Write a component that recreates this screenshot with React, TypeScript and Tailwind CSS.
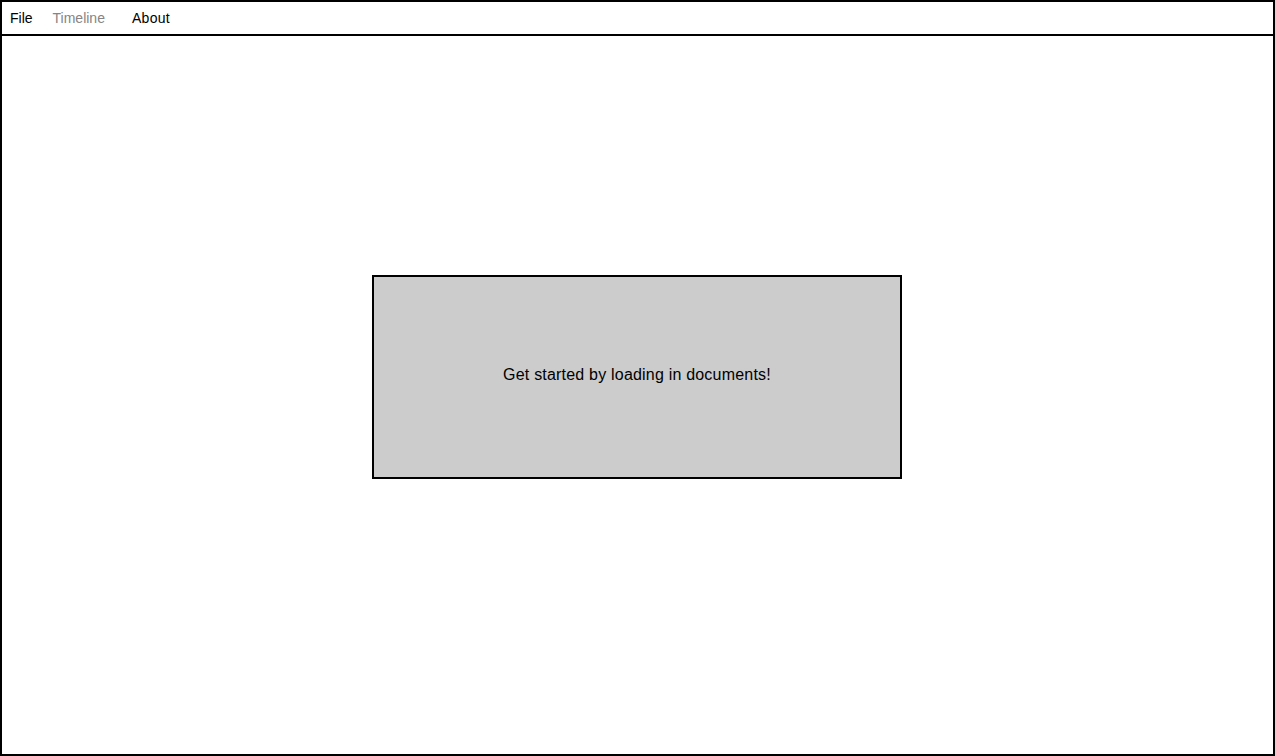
export default function App() {
  return (
    <div className="w-[1275px] h-[756px] bg-white flex flex-col font-['Liberation_Sans',Arial,sans-serif] text-black">
      {/* Menu bar */}
      <div className="h-[36px] shrink-0 border-2 border-black flex items-center text-[14px]">
        <span className="ml-[8px]">File</span>
        <span className="ml-[20px] text-[#858585]">Timeline</span>
        <span className="ml-[27px] tracking-[0.3px]">About</span>
      </div>

      {/* Main canvas */}
      <div className="flex-1 border-x-2 border-b-2 border-black flex pl-[370px] pt-[239px]">
        <div className="w-[530px] h-[204px] bg-[#cccccc] border-2 border-black flex items-center justify-center">
          <span className="text-[16px] tracking-[0.2px] -translate-y-[2px]">Get started by loading in documents!</span>
        </div>
      </div>
    </div>
  )
}
